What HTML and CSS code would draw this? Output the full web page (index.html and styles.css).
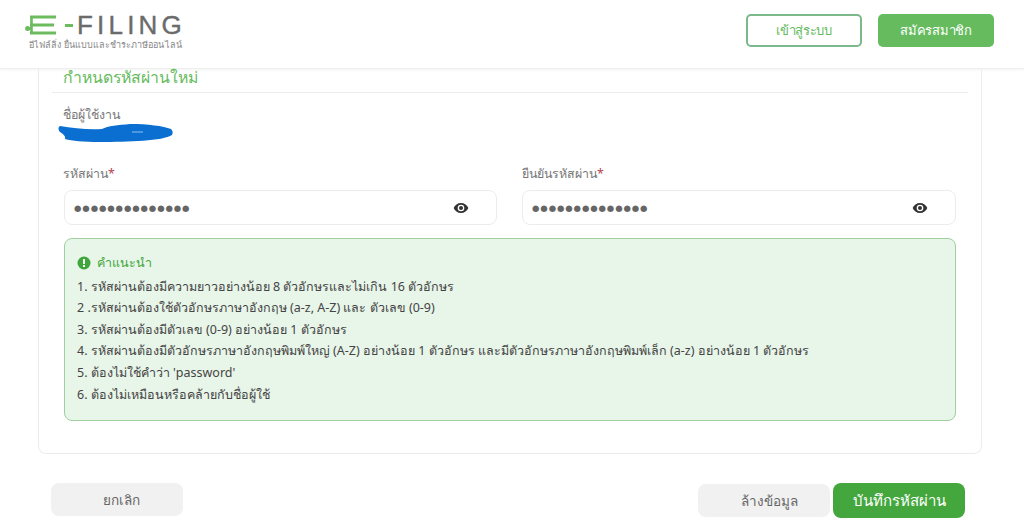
FILE: index.html
```html
<!DOCTYPE html>
<html lang="th">
<head>
  <meta charset="UTF-8">
  <title>E-Filing - กำหนดรหัสผ่านใหม่</title>
  <link rel="stylesheet" href="styles.css">
</head>
<body>

  <header class="topbar">
    <div class="logo">
      <div class="logo-main">
        <svg class="logo-mark" width="32" height="20" viewBox="0 0 32 20">
          <path d="M5 2H31M5 10H29M5 18H31" stroke="#6cbb5f" stroke-width="3.2" fill="none"/>
          <path d="M6.500 1V19M2 13.500H6.500" stroke="#6cbb5f" stroke-width="2.6" fill="none"/>
          <circle cx="2.600" cy="13.500" r="2.500" fill="#6cbb5f"/>
        </svg>
        <span class="logo-dash"></span>
        <span class="logo-text">FILING</span>
      </div>
      <div class="logo-sub">อีไฟล์ลิ่ง ยื่นแบบและชำระภาษีออนไลน์</div>
    </div>
    <div class="topbar-actions">
      <a class="btn btn-outline">เข้าสู่ระบบ</a>
      <a class="btn btn-green">สมัครสมาชิก</a>
    </div>
  </header>

  <main class="card">
    <h2 class="card-title">กำหนดรหัสผ่านใหม่</h2>

    <div class="card-body">
      <div class="user-label">ชื่อผู้ใช้งาน</div>
      <svg class="scribble" width="116" height="20" viewBox="0 0 116 20">
        <path d="M2 3C15 5 30 7 44 6C50 3 60 2 72 1C90 1 105 3 113 6C115 8 115 10 114 12C105 18 70 19 42 19C25 19 14 18 7 16C8 13 5 11 2 9C0 7 0 4 2 3Z" fill="#0a6fd0"/>
        <path d="M74 9H85" stroke="#8fc3ee" stroke-width="1"/>
      </svg>

      <div class="password-row">
        <div class="field">
          <label>รหัสผ่าน<span class="req">*</span></label>
          <div class="input-box">
            <span class="dots">●●●●●●●●●●●●●●</span>
            <svg class="eye" width="16" height="16" viewBox="0 0 24 24"><path fill="#333" d="M12 4.500C7 4.500 2.700 7.600 1 12c1.700 4.400 6 7.500 11 7.500s9.300-3.100 11-7.500c-1.700-4.400-6-7.500-11-7.500zm0 12.500a5 5 0 1 1 0-10 5 5 0 0 1 0 10zm0-8a3 3 0 1 0 0 6 3 3 0 0 0 0-6z"/></svg>
          </div>
        </div>
        <div class="field field-confirm">
          <label>ยืนยันรหัสผ่าน<span class="req">*</span></label>
          <div class="input-box">
            <span class="dots">●●●●●●●●●●●●●●</span>
            <svg class="eye" width="16" height="16" viewBox="0 0 24 24"><path fill="#333" d="M12 4.500C7 4.500 2.700 7.600 1 12c1.700 4.400 6 7.500 11 7.500s9.300-3.100 11-7.500c-1.700-4.400-6-7.500-11-7.500zm0 12.500a5 5 0 1 1 0-10 5 5 0 0 1 0 10zm0-8a3 3 0 1 0 0 6 3 3 0 0 0 0-6z"/></svg>
          </div>
        </div>
      </div>

      <div class="hint">
        <div class="hint-title">
          <svg width="14" height="14" viewBox="0 0 14 14"><circle cx="7" cy="7" r="6.500" fill="#3fa63c"/><rect x="6" y="3" width="2" height="5" fill="#fff"/><rect x="6" y="9" width="2" height="2" fill="#fff"/></svg>
          คำแนะนำ
        </div>
        <div>1. รหัสผ่านต้องมีความยาวอย่างน้อย 8 ตัวอักษรและไม่เกิน 16 ตัวอักษร</div>
        <div>2 .รหัสผ่านต้องใช้ตัวอักษรภาษาอังกฤษ (a-z, A-Z) และ ตัวเลข (0-9)</div>
        <div>3. รหัสผ่านต้องมีตัวเลข (0-9) อย่างน้อย 1 ตัวอักษร</div>
        <div>4. รหัสผ่านต้องมีตัวอักษรภาษาอังกฤษพิมพ์ใหญ่ (A-Z) อย่างน้อย 1 ตัวอักษร และมีตัวอักษรภาษาอังกฤษพิมพ์เล็ก (a-z) อย่างน้อย 1 ตัวอักษร</div>
        <div>5. ต้องไม่ใช้คำว่า 'password'</div>
        <div>6. ต้องไม่เหมือนหรือคล้ายกับชื่อผู้ใช้</div>
      </div>
    </div>
  </main>

  <footer class="actions">
    <a class="btn btn-grey btn-cancel">ยกเลิก</a>
    <div class="actions-right">
      <a class="btn btn-grey btn-clear">ล้างข้อมูล</a>
      <a class="btn btn-save">บันทึกรหัสผ่าน</a>
    </div>
  </footer>

</body>
</html>
```

FILE: styles.css
```css
:root {
  --green: #66bb5e;
  --green-dark: #43a73d;
  --grey-btn: #f1f1f1;
  --line: #ececec;
  --text: #444;
  --muted: #777;
}

html, body {
  height: 100%;
}

body {
  margin: 0;
  height: 525px;
  overflow: hidden;
  background-color: #fff;
  color: var(--text);
  font-family: "Noto Sans", "Open Sans", "DejaVu Sans", sans-serif;
  font-size: 13px;
}

.topbar {
  box-sizing: border-box;
  height: 69px;
  padding: 14px 30px 0 25px;
  display: flex;
  justify-content: space-between;
  align-items: flex-start;
  border-bottom: 1px solid #eee;
  box-shadow: 0 1px 3px rgba(0,0,0,0.05);
}

.logo-main {
  display: flex;
  align-items: center;
  height: 22px;
}

.logo-mark {
  flex: none;
}

.logo-dash {
  width: 8px;
  height: 3px;
  margin: 0 4px 0 8px;
  background-color: #6cbb5f;
}

.logo-text {
  font-family: "Liberation Sans", sans-serif;
  font-size: 26px;
  line-height: 22px;
  letter-spacing: 4.2px;
  color: #6b6b6b;
  -webkit-text-stroke: 0.4px #6b6b6b;
}

.logo-sub {
  margin: 2px 0 0 4px;
  font-size: 9px;
  line-height: 13px;
  letter-spacing: 0.05px;
  color: #888;
  white-space: nowrap;
}

.topbar-actions {
  display: flex;
  gap: 16px;
}

.btn {
  box-sizing: border-box;
  display: flex;
  align-items: center;
  justify-content: center;
  width: 116px;
  height: 33px;
  border-radius: 5px;
  font-size: 13px;
  font-weight: 500;
}

.btn-outline {
  border: 2px solid #7cb98a;
  color: var(--green);
  letter-spacing: -0.3px;
}

.btn-green {
  background-color: var(--green);
  color: #fff;
  letter-spacing: -0.3px;
}

.card {
  box-sizing: border-box;
  width: 944px;
  height: 385px;
  margin-left: 38px;
  padding: 0 13px;
  border: 1px solid var(--line);
  border-top: none;
  border-radius: 0 0 8px 8px;
}

.card-title {
  margin: 0;
  height: 23px;
  padding-left: 11px;
  border-bottom: 1px solid var(--line);
  font-size: 15.800px;
  font-weight: 500;
  line-height: 16px;
  color: var(--green);
}

.card-body {
  padding: 12px 12px 0;
}

.user-label {
  margin-left: -1px;
  font-size: 12.400px;
  line-height: 20px;
  color: var(--muted);
}

.scribble {
  display: block;
  margin: -2px 0 0 -6px;
}

.password-row {
  display: grid;
  grid-template-columns: 433px 434px;
  gap: 25px;
  margin-top: 21px;
}

.field label {
  display: block;
  height: 26px;
  margin-left: -1px;
  font-size: 12.400px;
  line-height: 20px;
  color: var(--muted);
}

.field-confirm label {
  margin-left: 0;
}

.req {
  color: #b5434f;
}

.input-box {
  box-sizing: border-box;
  height: 35px;
  padding: 0 27px 0 9px;
  display: flex;
  align-items: center;
  justify-content: space-between;
  border: 1px solid var(--line);
  border-radius: 8px;
}

.dots {
  font-family: "DejaVu Sans", sans-serif;
  font-size: 8.500px;
  letter-spacing: 0.900px;
  color: #666;
}

.hint {
  box-sizing: border-box;
  width: 892px;
  height: 183px;
  margin-top: 13px;
  padding: 13px 12px;
  background-color: #e8f5e9;
  border: 1px solid #9fce9f;
  border-radius: 8px;
  font-size: 12.500px;
  line-height: 21.600px;
  color: var(--text);
}

.hint-title {
  display: flex;
  align-items: center;
  gap: 6px;
  margin-bottom: 2px;
  font-weight: 500;
  color: var(--green-dark);
}

.actions {
  display: flex;
  justify-content: space-between;
  align-items: flex-start;
  padding: 29px 59px 0 51px;
}

.actions .btn {
  width: 132px;
  height: 33px;
  border-radius: 8px;
}

.actions-right {
  display: flex;
  align-items: flex-start;
  gap: 3px;
}

.actions .btn-clear {
  margin-top: 1px;
  padding-left: 10px;
  font-size: 13.500px;
}

.actions .btn-cancel {
  padding-left: 8px;
  font-size: 13.500px;
}

.actions .btn-save {
  height: 35px;
  font-size: 15px;
}

.btn-grey {
  background-color: var(--grey-btn);
  color: #666;
}

.btn-save {
  background-color: var(--green-dark);
  color: #fff;
}
```
